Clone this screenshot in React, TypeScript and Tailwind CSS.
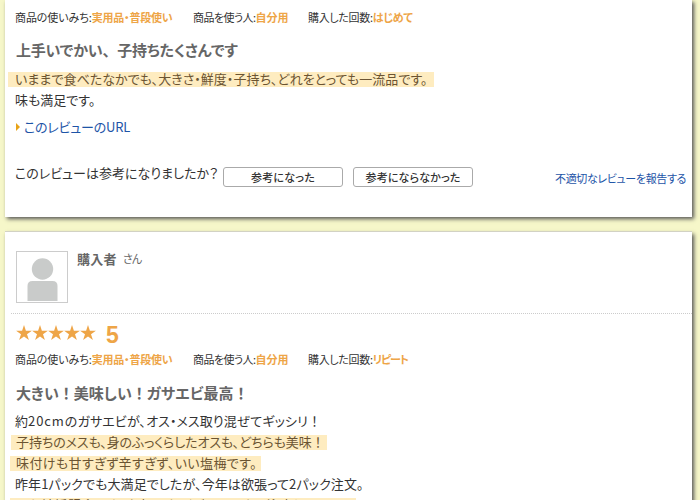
interface Line {
  text: string
  className: string
  mark?: string
}

interface Meta {
  label: string
  value: string
  className: string
  labelClassName: string
  valueClassName: string
}

const usage: Meta = {
  label: '商品の使いみち:',
  value: '実用品・普段使い',
  className: 'w-[178px]',
  labelClassName: 'tracking-[-0.1px]',
  valueClassName: 'tracking-[-0.2px]'
}

const user: Meta = {
  label: '商品を使う人:',
  value: '自分用',
  className: 'w-[115px]',
  labelClassName: 'tracking-[-0.55px]',
  valueClassName: ''
}

const firstMeta: Meta[] = [
  usage,
  user,
  {
    label: '購入した回数:',
    value: 'はじめて',
    className: '',
    labelClassName: 'tracking-[-0.3px]',
    valueClassName: 'tracking-[-0.4px]'
  }
]

const secondMeta: Meta[] = [
  usage,
  user,
  {
    label: '購入した回数:',
    value: 'リピート',
    className: '',
    labelClassName: 'tracking-[-0.3px]',
    valueClassName: 'tracking-[-1.2px]'
  }
]

const firstLines: Line[] = [
  {
    text: 'いままで食べたなかでも、大きさ・鮮度・子持ち、どれをとっても一流品です。',
    className: 'tracking-[0.04px]',
    mark: 'ml-[8px] w-[426px] pl-[7px]'
  },
  { text: '味も満足です。', className: '' }
]

const secondLines: Line[] = [
  { text: '約20cmのガサエビが、オス・メス取り混ぜてギッシリ！', className: 'tracking-[0.1px]' },
  {
    text: '子持ちのメスも、身のふっくらしたオスも、どちらも美味！',
    className: 'tracking-[-0.1px]',
    mark: 'ml-[11px] w-[316px] pl-[5px]'
  },
  {
    text: '味付けも甘すぎず辛すぎず、いい塩梅です。',
    className: 'tracking-[0.4px]',
    mark: 'ml-[10px] w-[251px] pl-[6px]'
  },
  {
    text: '昨年1パックでも大満足でしたが、今年は欲張って2パック注文。',
    className: 'tracking-[0.1px]'
  },
  {
    text: 'また結婚記念日や、お祝いなどがあるときに注文します。',
    className: 'tracking-[0.4px]',
    mark: 'ml-[10px] w-[346px] pl-[6px]'
  }
]

// Exclamation marks keep their full width, "cm" quantities are spaced out
function Spaced({ text }: { text: string }) {
  return text.split(/(！|\d+cm)/).map((part, i) => {
    if (part === '！') {
      return (
        <span key={i} className="[font-feature-settings:normal]">
          {part}
        </span>
      )
    }
    if (part.endsWith('cm')) {
      return (
        <span key={i} className="tracking-[0.9px]">
          {part}
        </span>
      )
    }
    return part
  })
}

function MetaRow({ items }: { items: Meta[] }) {
  return (
    <div className="flex h-[16px] pl-[10px] text-[11px] leading-[16px]">
      {items.map((m) => (
        <div key={m.label} className={m.className}>
          <span className={m.labelClassName}>{m.label}</span>
          <b className={`text-[#eea547] ${m.valueClassName}`}>{m.value}</b>
        </div>
      ))}
    </div>
  )
}

function Lines({ lines }: { lines: Line[] }) {
  return (
    <div className="-ml-[5px] text-[13px]">
      {lines.map((l) => (
        <div key={l.text} className="flex h-[21px] items-center">
          <p
            className={
              l.mark
                ? `h-[15px] bg-[#feecc0] leading-[13px] text-[#6b5432] ${l.mark}`
                : 'ml-[15px] h-[15px] leading-[13px]'
            }
          >
            <span className={l.className}>
              <Spaced text={l.text} />
            </span>
          </p>
        </div>
      ))}
    </div>
  )
}

const cardShadow = 'shadow-[0_-1px_0_#d2d2c4,2px_2px_4px_#555]'

export default function App() {
  return (
    <div
      lang="ja"
      className="h-[500px] w-[700px] overflow-hidden bg-[#f6f7c9] pl-[5px] font-['Noto_Sans_CJK_JP',sans-serif] whitespace-nowrap text-[#333] [font-feature-settings:'palt']"
    >
      <section className={`flex h-[217px] w-[687px] flex-col bg-white pt-[9px] ${cardShadow}`}>
        <MetaRow items={firstMeta} />
        <h2 className="mt-[15px] h-[20px] pl-[11px] text-[15px] leading-[20px] font-bold tracking-[-0.2px] text-[#666]">
          上手いでかい<span className="[font-feature-settings:normal]">、</span>子持ちたくさんです
        </h2>
        <div className="mt-[9px]">
          <Lines lines={firstLines} />
        </div>
        <a className="mt-[6px] flex h-[20px] items-center pl-[11px] text-[13px] tracking-[-0.2px] text-[#1d54a7]">
          <span className="mr-[4px] border-y-[4px] border-l-[4px] border-y-transparent border-l-[#e8a317]" />
          このレビューのURL
        </a>
        <div className="mt-[30px] flex h-[20px] items-start">
          <p className="w-[218px] pl-[10px] text-[13px] leading-[12px]">
            このレビューは参考になりましたか？
          </p>
          <button className="h-[20px] w-[120px] rounded-[3px] border border-[#aaa] text-[11px] leading-[18px] font-medium tracking-[0.2px]">
            参考になった
          </button>
          <button className="ml-[10px] h-[20px] w-[120px] rounded-[3px] border border-[#aaa] text-[11px] leading-[18px] font-medium tracking-[0.15px]">
            参考にならなかった
          </button>
          <a className="ml-[82px] text-[11px] leading-[22px] tracking-[-0.35px] text-[#1d54a7]">
            不適切なレビューを報告する
          </a>
        </div>
      </section>

      <section className={`mt-[15px] h-[300px] w-[687px] bg-white pt-[19px] ${cardShadow}`}>
        <div className="flex h-[52px] pl-[11px]">
          <svg width="52" height="52" viewBox="0 0 52 52">
            <rect x=".5" y=".5" width="51" height="51" fill="#fff" stroke="#ccc" />
            <circle cx="26.500" cy="18" r="10.700" fill="#c9cbca" />
            <path d="M11.500 50V35q0-5 5-5h20q5 0 5 5v15z" fill="#c9cbca" />
          </svg>
          <p className="ml-[9px] text-[13px] leading-[15px] font-bold tracking-[0.3px] text-[#666]">
            購入者
          </p>
          <p className="ml-[6px] text-[11px] leading-[15px] tracking-[-0.8px] text-[#666]">さん</p>
        </div>
        <div className="mt-[10px] ml-[6px] border-t border-dotted border-[#ccc]" />
        <div className="mt-[7px] flex h-[24px] items-center pl-[11px]">
          <svg width="80" height="18" viewBox="0 0 80 18" fill="#eea547">
            {[0, 16, 32, 48, 64].map((x) => (
              <path
                key={x}
                transform={`translate(${x} 0)`}
                d="M8 1l1.900 5.700h6L11 10.200l1.900 5.800L8 12.500l-4.900 3.500L5 10.200.1 6.700h6z"
              />
            ))}
          </svg>
          <b className="mt-[3px] ml-[10px] font-['Liberation_Sans',sans-serif] text-[23px] leading-[24px] text-[#eea547]">
            5
          </b>
        </div>
        <div className="mt-[6px]">
          <MetaRow items={secondMeta} />
        </div>
        <h2 className="mt-[16px] h-[20px] pl-[11px] text-[15px] leading-[20px] font-bold text-[#666]">
          <Spaced text="大きい！美味しい！ガサエビ最高！" />
        </h2>
        <div className="mt-[8px]">
          <Lines lines={secondLines} />
        </div>
      </section>
    </div>
  )
}
